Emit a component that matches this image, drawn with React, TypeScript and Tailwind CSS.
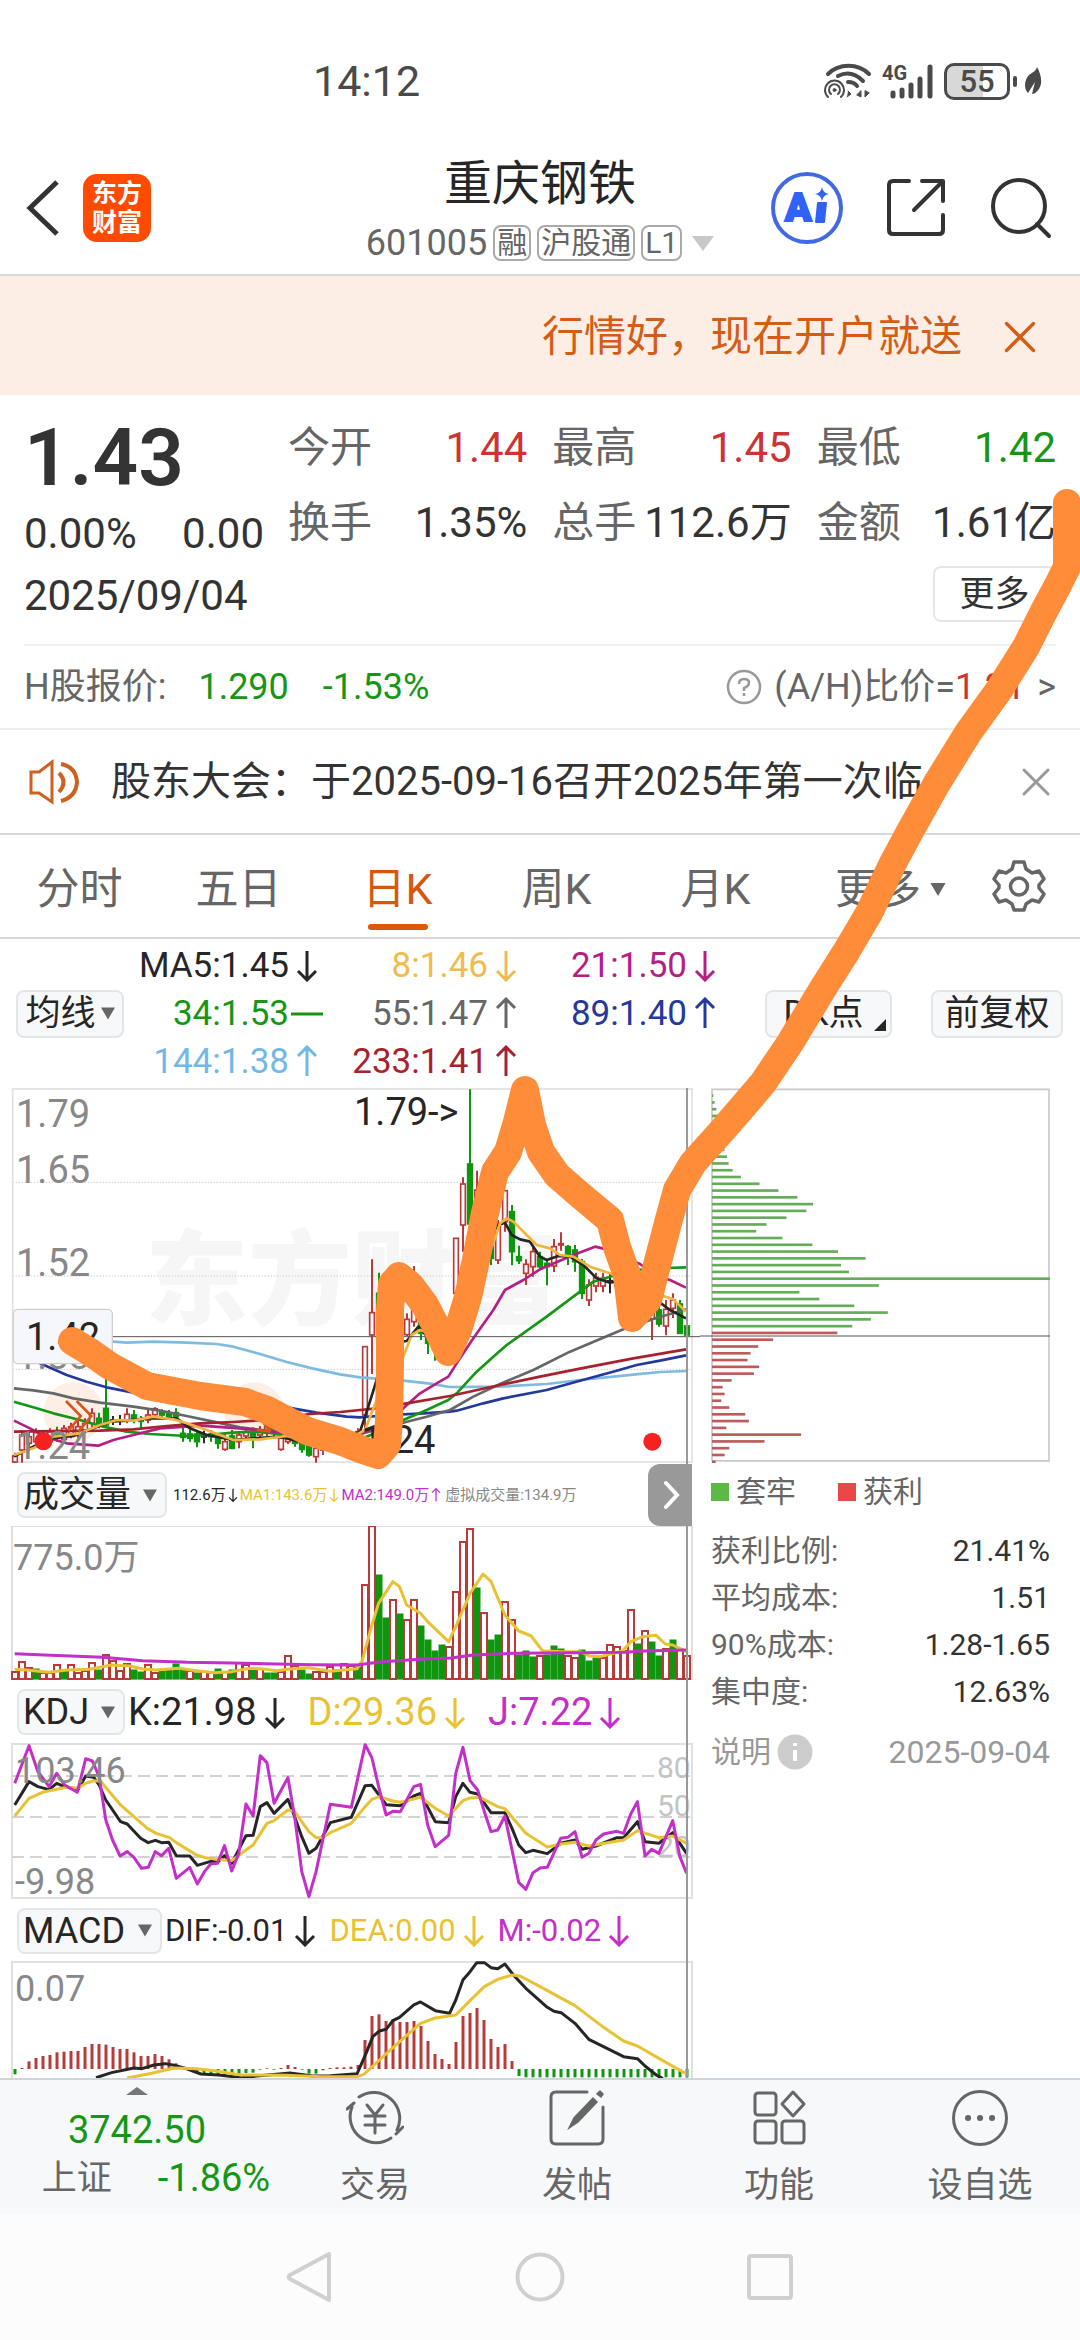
import { X } from 'lucide-react'
import type { ReactElement, ReactNode } from 'react'

type Trend = 'up' | 'down' | 'flat'
type Candle = [index: number, color: string, high: number, low: number, top: number, bottom: number]

const RED = '#b93a38'
const GREEN = '#0f960f'
const COLORS: Record<string, string> = { r: RED, g: GREEN, k: '#2a2a2a' }

const STATS = [
  { label: '今开', value: '1.44', color: 'text-[#cc3333]' },
  { label: '最高', value: '1.45', color: 'text-[#cc3333]' },
  { label: '最低', value: '1.42', color: 'text-[#159615]' },
  { label: '换手', value: '1.35%', color: 'text-[#333]' },
  { label: '总手', value: '112.6万', color: 'text-[#333]' },
  { label: '金额', value: '1.61亿', color: 'text-[#333]' },
]

const TABS = ['分时', '五日', '日K', '周K', '月K']

const AVERAGES: { text: string; trend: Trend; color: string }[] = [
  { text: 'MA5:1.45', trend: 'down', color: 'text-[#262626]' },
  { text: '8:1.46', trend: 'down', color: 'text-[#eebb4d]' },
  { text: '21:1.50', trend: 'down', color: 'text-[#b51f83]' },
  { text: '34:1.53', trend: 'flat', color: 'text-[#159615]' },
  { text: '55:1.47', trend: 'up', color: 'text-[#666]' },
  { text: '89:1.40', trend: 'up', color: 'text-[#24399b]' },
  { text: '144:1.38', trend: 'up', color: 'text-[#72b8e6]' },
  { text: '233:1.41', trend: 'up', color: 'text-[#a8222d]' },
]

const CHIP_STATS = [
  ['获利比例:', '21.41%'],
  ['平均成本:', '1.51'],
  ['90%成本:', '1.28-1.65'],
  ['集中度:', '12.63%'],
]

const CHIPS = [
  4, 8, 13, 17, 15, 25, 28, 32, 37, 45, 50, 62, 87, 143, 200, 257, 304, 284, 224, 164, 133, 212, 302, 379, 462, 388,
  412, 1017, 502, 263, 323, 428, 529, 478, 422, 377, 184, 139, 116, 107, 142, 126, 59, 32, 38, 28, 52, 100, 111, 43,
  268, 158, 52, 38, 11,
]

const CANDLES: Candle[] = [
  [0, 'r', 1118, 1148, 1128, 1146],
  [1, 'r', 1052, 1148, 1065, 1110],
  [2, 'r', 1050, 1100, 1070, 1090],
  [3, 'r', 1045, 1095, 1058, 1085],
  [4, 'g', 1050, 1090, 1060, 1080],
  [5, 'r', 1045, 1090, 1055, 1085],
  [6, 'g', 1040, 1085, 1052, 1075],
  [7, 'r', 1035, 1085, 1045, 1078],
  [8, 'r', 1028, 1075, 1040, 1065],
  [9, 'r', 1020, 1075, 1040, 1062],
  [10, 'r', 1015, 1060, 1030, 1050],
  [11, 'r', 985, 1055, 1000, 1030],
  [12, 'g', 998, 1045, 1015, 1030],
  [13, 'g', 880, 1040, 985, 1035],
  [14, 'k', 1008, 1035, 1020, 1023],
  [15, 'k', 1005, 1035, 1020, 1023],
  [16, 'r', 985, 1030, 1003, 1022],
  [17, 'g', 990, 1030, 1005, 1020],
  [18, 'g', 1008, 1045, 1018, 1024],
  [19, 'r', 990, 1030, 1005, 1020],
  [20, 'r', 982, 1010, 986, 1004],
  [21, 'g', 988, 1015, 998, 1005],
  [22, 'g', 990, 1018, 1000, 1010],
  [23, 'g', 985, 1018, 998, 1010],
  [24, 'g', 1038, 1085, 1060, 1072],
  [25, 'g', 1042, 1085, 1062, 1075],
  [26, 'g', 1050, 1102, 1062, 1085],
  [27, 'k', 1052, 1090, 1068, 1071],
  [28, 'g', 1050, 1085, 1062, 1070],
  [29, 'g', 1060, 1106, 1070, 1090],
  [30, 'r', 1062, 1112, 1085, 1108],
  [31, 'g', 1050, 1108, 1068, 1105],
  [32, 'r', 1055, 1105, 1065, 1085],
  [33, 'r', 1048, 1080, 1055, 1068],
  [34, 'g', 1042, 1105, 1055, 1075],
  [35, 'r', 1038, 1080, 1050, 1065],
  [36, 'r', 1030, 1068, 1040, 1058],
  [37, 'g', 1035, 1070, 1045, 1060],
  [38, 'r', 1058, 1112, 1075, 1108],
  [39, 'r', 1060, 1092, 1068, 1085],
  [40, 'g', 1060, 1100, 1070, 1090],
  [41, 'g', 1080, 1118, 1090, 1108],
  [42, 'g', 1085, 1130, 1095, 1125],
  [43, 'r', 1095, 1148, 1105, 1130],
  [44, 'r', 1080, 1125, 1090, 1110],
  [45, 'g', 1075, 1115, 1085, 1100],
  [46, 'r', 1065, 1110, 1075, 1095],
  [47, 'r', 1058, 1100, 1070, 1085],
  [48, 'k', 1060, 1090, 1072, 1075],
  [49, 'r', 1045, 1085, 1055, 1075],
  [50, 'r', 800, 1050, 800, 1005],
  [51, 'r', 538, 882, 698, 765],
  [52, 'g', 578, 790, 640, 780],
  [53, 'g', 620, 800, 650, 770],
  [54, 'r', 640, 810, 660, 780],
  [55, 'g', 680, 800, 700, 780],
  [56, 'r', 700, 768, 718, 764],
  [57, 'r', 558, 740, 690, 725],
  [58, 'g', 660, 780, 690, 760],
  [59, 'g', 740, 822, 760, 790],
  [60, 'g', 780, 842, 790, 810],
  [61, 'r', 750, 830, 770, 810],
  [62, 'k', 720, 790, 750, 753],
  [63, 'r', 475, 640, 475, 640],
  [64, 'r', 292, 515, 312, 435],
  [65, 'g', 28, 434, 252, 432],
  [66, 'r', 272, 500, 330, 440],
  [67, 'g', 252, 540, 300, 480],
  [68, 'g', 430, 555, 470, 535],
  [69, 'r', 420, 552, 440, 540],
  [70, 'r', 330, 455, 332, 425],
  [71, 'g', 375, 556, 395, 515],
  [72, 'g', 497, 552, 530, 542],
  [73, 'r', 538, 615, 553, 580],
  [74, 'r', 498, 590, 515, 560],
  [75, 'g', 515, 570, 530, 560],
  [76, 'g', 540, 616, 550, 560],
  [77, 'r', 477, 576, 500, 558],
  [78, 'r', 457, 512, 491, 495],
  [79, 'g', 495, 555, 500, 525],
  [80, 'g', 495, 575, 510, 545],
  [81, 'g', 537, 657, 545, 640],
  [82, 'r', 598, 678, 615, 660],
  [83, 'r', 578, 637, 592, 618],
  [84, 'r', 578, 637, 595, 618],
  [85, 'k', 580, 640, 602, 606],
  [86, 'r', 580, 630, 590, 618],
  [87, 'g', 590, 640, 600, 625],
  [88, 'r', 560, 640, 580, 620],
  [89, 'g', 600, 680, 620, 660],
  [90, 'g', 640, 700, 650, 690],
  [91, 'r', 690, 780, 700, 716],
  [92, 'g', 670, 740, 690, 732],
  [93, 'r', 660, 766, 688, 738],
  [94, 'r', 640, 714, 660, 685],
  [95, 'g', 660, 761, 672, 760],
  [96, 'g', 718, 780, 738, 765],
]

const PRICE_LINES = [
  { color: '#7dbbe0', points: '45,760 200,778 340,785 380,788 460,785 560,788 650,792 700,800 780,822 860,846 940,866 1020,883 1080,892 1210,902 1290,911 1350,921 1500,920 1640,912 1740,900 1900,884 1980,876 2058,873' },
  { color: '#24399b', points: '45,800 120,850 200,885 260,905 320,922 400,938 560,960 720,970 860,982 950,998 1040,1010 1080,1012 1170,1005 1270,1000 1350,995 1370,992 1450,970 1510,955 1640,930 1740,902 1850,872 1910,855 1980,842 2058,826' },
  { color: '#666', points: '42,925 100,931 160,940 220,955 300,968 400,980 480,992 560,1008 640,1025 720,1042 800,1052 900,1060 1000,1066 1090,1060 1215,1027 1280,1010 1350,990 1420,950 1500,912 1600,870 1710,815 1870,748 1960,717 2058,688' },
  { color: '#159615', points: '42,965 110,985 160,1000 240,1020 310,1040 380,1055 450,1062 560,1068 620,1065 700,1058 760,1055 840,1062 960,1075 1080,1078 1150,1050 1210,1020 1280,990 1345,960 1370,940 1425,880 1480,830 1520,795 1640,710 1740,635 1780,605 1830,590 1880,572 2000,564 2058,562' },
  { color: '#b51f83', points: '42,1022 90,1045 140,1072 200,1090 295,1097 340,1080 400,1065 480,1045 600,1037 720,1045 850,1058 1050,1070 1140,1040 1210,985 1260,940 1310,910 1345,890 1370,850 1420,775 1480,690 1515,630 1570,600 1620,568 1720,525 1785,500 1820,508 1870,530 1920,552 1970,588 2010,600 2058,623' },
  { color: '#a8222d', points: '42,1055 300,1052 400,1048 500,1038 600,1030 700,1026 800,1020 930,1002 1020,996 1130,985 1220,970 1350,948 1500,915 1620,890 1740,866 1900,835 2058,808' },
  { color: '#262626', points: '42,1130 100,1100 150,1075 220,1068 280,1045 330,1025 380,1022 440,1015 530,1015 570,1045 620,1065 700,1080 760,1075 840,1070 900,1085 970,1103 1030,1080 1080,1055 1105,980 1130,900 1170,790 1205,785 1220,783 1255,740 1300,790 1350,760 1400,600 1460,480 1495,435 1515,428 1535,465 1560,478 1590,485 1620,530 1640,540 1675,528 1710,530 1750,555 1790,595 1830,608 1870,600 1920,620 1980,668 2010,690 2058,715' },
  { color: '#f2b43f', points: '42,1125 100,1105 160,1070 240,1060 300,1035 350,1020 400,1022 460,1010 520,1018 560,1030 620,1050 700,1080 780,1078 860,1068 970,1090 1050,1075 1095,1050 1130,960 1170,870 1210,830 1235,765 1260,750 1350,780 1420,620 1480,490 1500,430 1520,415 1540,425 1580,465 1610,495 1650,505 1680,525 1720,530 1770,560 1830,580 1880,600 1940,635 1990,648 2020,658 2058,695' },
]

// one letter and one height per trading day
const VOLUME_SIDES = 'rrrgrrrgrrrrgrrrrggrrggggrgrrgrgrrgrggrrrggrrrgrrgrrggrgrrggggrrrrgrggrrgggrgggrrgggrrrrrgrggrgrrgr'
const VOLUME_HEIGHTS = [
  7, 17, 11, 10, 6, 6, 14, 9, 14, 6, 8, 16, 9, 24, 18, 8, 15, 9, 7, 14, 6, 8, 9, 15, 10, 8, 6, 7, 6, 10, 7, 9, 16, 14,
  10, 10, 6, 6, 7, 23, 13, 9, 5, 7, 7, 12, 9, 15, 13, 12, 94, 153, 104, 61, 79, 65, 59, 79, 53, 39, 28, 34, 32, 87, 137,
  150, 91, 66, 39, 44, 77, 59, 24, 28, 22, 23, 24, 33, 30, 23, 21, 29, 18, 21, 21, 34, 32, 28, 69, 35, 48, 37, 23, 30,
  39, 29, 23,
]

// top edges, measured against a zero line at 507
const MACD_TOPS = [
  523, 504, 484, 474, 468, 465, 457, 455, 453, 453, 441, 432, 432, 434, 441, 447, 447, 457, 468, 468, 462, 468, 478,
  490, 503, 510, 520, 523, 525, 526, 527, 525, 521, 519, 518, 509, 505, 509, 504, 495, 501, 509, 521, 521, 511, 504,
  502, 502, 500, 495, 420, 348, 343, 363, 358, 366, 366, 363, 378, 423, 462, 477, 492, 426, 348, 339, 324, 360, 417,
  441, 432, 483, 528, 532, 532, 532, 532, 532, 532, 532, 532, 532, 532, 532, 532, 532, 532, 532, 532, 532, 532, 532,
  532, 532, 532, 532, 532,
]

function TrendArrow({ trend, className }: { trend: Trend; className: string }): ReactElement {
  const paths: Record<Trend, string> = {
    down: 'M16 2V31M7 22L16 31L25 22',
    up: 'M16 31V2M7 11L16 2L25 11',
    flat: 'M0 17H32',
  }
  return (
    <svg viewBox="0 0 32 33" className={className} fill="none" stroke="currentColor" strokeWidth="3">
      <path d={paths[trend]} />
    </svg>
  )
}

function Triangle({ className }: { className: string }): ReactElement {
  return (
    <svg viewBox="0 0 14 12" className={className} fill="currentColor">
      <path d="M0 0H14L7 12Z" />
    </svg>
  )
}

function StatusBar(): ReactElement {
  return (
    <div className="flex h-[120px] items-center justify-between pt-[42px] pr-[38px] pl-[313px] text-[#4a4a4a]">
      <span className="text-[43px] leading-none">14:12</span>
      <div className="flex items-center">
        <svg viewBox="0 0 48 36" className="h-[36px] w-[48px]" fill="none" stroke="currentColor" strokeLinecap="round">
          <path d="M4 11C15 0 34 0 45 11" strokeWidth="4" />
          <path d="M14 13C22 9 31 10 39 18" strokeWidth="4" />
          <path d="M24 19C28 19 31 20 33 23" strokeWidth="4" />
          <path d="M4 34A9.500 9.500 0 1 1 17 34" strokeWidth="2" />
          <path d="M7 31A5.500 5.500 0 1 1 14 31" strokeWidth="2" />
          <circle cx="10.500" cy="27" r="1.500" fill="currentColor" strokeWidth="1" />
          <path d="M24 28L27 31L23 34M37 28V34L33 32ZM41 28V34L45 30Z" fill="currentColor" strokeWidth="1" />
        </svg>
        <svg viewBox="0 0 54 38" className="ml-[10px] h-[38px] w-[54px]" stroke="currentColor" strokeWidth="5" strokeLinecap="round">
          <text x="0" y="18" fontSize="20" fontWeight="700" fill="currentColor" stroke="none">4G</text>
          <path d="M11 31V34M20 28V34M29 23V34M38 17V34M48 5V34" />
        </svg>
        <div className="ml-[8px] flex h-[37px] w-[66px] items-center justify-center rounded-[10px] border-[3px] border-current bg-linear-to-r from-[#d8d8d8] from-60% to-white to-60% text-[31px] leading-none font-medium">
          55
        </div>
        <span className="ml-[3px] h-[11px] w-[4px] rounded-full bg-[#4a4a4a]" />
        <svg viewBox="0 0 18 30" className="ml-[7px] h-[30px] w-[18px]" fill="currentColor">
          <path d="M13 1C17 8 19 17 15 23C13 26 10 28 8 28L11 16L4 27C-1 22 1 13 5 9C9 6 12 5 13 1Z" />
        </svg>
      </div>
    </div>
  )
}

function Tag({ children }: { children: ReactNode }): ReactElement {
  return (
    <span className="flex h-[36px] items-center rounded-[8px] border-2 border-[#aaa] px-[2px] text-[30px] leading-none">
      {children}
    </span>
  )
}

function Header(): ReactElement {
  return (
    <header className="relative flex h-[156px] items-center justify-between border-b-2 border-[#d8d8d8] pt-[22px] pr-[28px] pl-[24px]">
      <div className="flex items-center">
        <button type="button" aria-label="返回" className="flex h-[70px] w-[40px] items-center text-[#333]">
          <svg viewBox="0 0 36 56" className="h-[56px] w-[36px]" fill="none" stroke="currentColor" strokeWidth="5">
            <path d="M33 2L6 28L33 54" />
          </svg>
        </button>
        <a href="#home" className="ml-[19px] flex h-[68px] w-[68px] flex-col items-center justify-center rounded-[14px] bg-[#ff4a03] text-[25px] leading-[29px] font-bold text-white">
          <span>东方</span>
          <span>财富</span>
        </a>
      </div>
      <div className="absolute inset-x-[340px] top-[34px] flex flex-col items-center">
        <h1 className="text-[48px] leading-[60px] text-[#262626]">重庆钢铁</h1>
        <button type="button" className="mt-[9px] flex items-center gap-[6px] text-[36px] leading-[40px] whitespace-nowrap text-[#666]">
          <span>601005</span>
          <Tag>融</Tag>
          <Tag>沪股通</Tag>
          <Tag>L1</Tag>
          <svg viewBox="0 0 22 15" className="ml-[4px] h-[15px] w-[22px]" fill="#c8c8c8">
            <path d="M0 0H22L11 15Z" />
          </svg>
        </button>
      </div>
      <div className="flex items-center">
        <button type="button" aria-label="Ai" className="mr-[43px]">
          <svg viewBox="0 0 72 72" className="h-[72px] w-[72px]">
            <circle cx="36" cy="36" r="34" fill="none" stroke="#4169e1" strokeWidth="4" />
            <text x="14" y="49" fontSize="39" fontWeight="900" fill="#2f62f5" stroke="#2f62f5" strokeWidth="2">A</text>
            <path d="M47 31H55L53 50H45Z" fill="#2f62f5" stroke="#2f62f5" strokeWidth="2" strokeLinejoin="round" />
            <path d="M51 15Q52 21 58 22Q52 23 51 29Q50 23 44 22Q50 21 51 15Z" fill="#2f62f5" />
          </svg>
        </button>
        <button type="button" aria-label="分享" className="mr-[44px]">
          <svg viewBox="0 0 60 60" className="h-[60px] w-[60px]" fill="none" stroke="#333" strokeWidth="4" strokeLinecap="round" strokeLinejoin="round">
            <path d="M23 3H7Q3 3 3 7V52Q3 56 7 56H53Q57 56 57 52V37M36 3H57V23M56 4L28 32" />
          </svg>
        </button>
        <button type="button" aria-label="搜索">
          <svg viewBox="0 0 62 62" className="h-[62px] w-[62px]" fill="none" stroke="#333" strokeWidth="4" strokeLinecap="round">
            <circle cx="29" cy="29" r="26" />
            <path d="M47 47L59 59" />
          </svg>
        </button>
      </div>
    </header>
  )
}

function Banner(): ReactElement {
  return (
    <div className="flex h-[119px] items-center justify-end bg-[#fceee5] pt-[2px] pr-[42px] text-[#d35d14]">
      <a href="#open" className="text-[42px] leading-none">行情好，现在开户就送</a>
      <button type="button" aria-label="关闭" className="ml-[40px]">
        <X className="h-[36px] w-[36px]" strokeWidth={1.5} viewBox="4 4 16 16" />
      </button>
    </div>
  )
}

function Quote(): ReactElement {
  return (
    <section className="mx-[24px] grid grid-cols-[264px_1fr] border-b-2 border-[#f0f0f0] pt-[15px] pb-[14px] text-[42px] leading-none text-[#333]">
      <div>
        <div className="flex h-[96px] items-center text-[80px] font-semibold">1.43</div>
        <div className="flex h-[56px] w-[240px] items-center justify-between">
          <span>0.00%</span>
          <span>0.00</span>
        </div>
        <div className="flex h-[68px] items-center">2025/09/04</div>
      </div>
      <div>
        <dl className="grid grid-cols-3 gap-x-[25px]">
          {STATS.map((s) => (
            <div key={s.label} className="flex h-[75px] items-center justify-between whitespace-nowrap">
              <dt className="text-[#666]">{s.label}</dt>
              <dd className={s.color}>{s.value}</dd>
            </div>
          ))}
        </dl>
        <button type="button" className="mt-[6px] ml-auto block h-[56px] w-[123px] rounded-[8px] border-2 border-[#e6e6e6] text-[35px] leading-none">
          更多
        </button>
      </div>
    </section>
  )
}

function HShareRow(): ReactElement {
  return (
    <div className="flex h-[84px] items-center border-b-2 border-[#ececec] px-[24px] text-[36px] leading-none text-[#666]">
      <span>H股报价:</span>
      <span className="ml-[32px] text-[#159615]">1.290</span>
      <span className="ml-[34px] text-[#159615]">-1.53%</span>
      <button type="button" className="ml-auto flex items-center">
        <svg viewBox="0 0 36 36" className="mr-[12px] h-[36px] w-[36px] text-[#999]" fill="none" stroke="currentColor" strokeWidth="2.500">
          <circle cx="18" cy="18" r="16" />
          <path d="M13 15Q13 10 18 10Q23 10 23 14Q23 17 18 19V22M18 24V27" />
        </svg>
        <span>(A/H)比价=</span>
        <span className="text-[#cc3333]">1.21</span>
        <span className="ml-[12px]">&gt;</span>
      </button>
    </div>
  )
}

function Notice(): ReactElement {
  return (
    <div className="flex h-[105px] items-center border-b-2 border-[#d5d8da] pr-[28px] pl-[28px]">
      <svg viewBox="0 0 54 46" className="h-[46px] w-[54px] shrink-0" fill="none" stroke="#cc6122" strokeWidth="3">
        <path d="M3 13H11L24 3V43L11 34H3Z" />
        <path d="M31 14Q40 23 31 33M33 5Q48 8 49 23Q48 38 33 42" strokeWidth="4" />
      </svg>
      <p className="ml-[29px] text-[40px] leading-[56px] whitespace-nowrap text-[#333]">
        股东大会：于2025-09-16召开2025年第一次临
      </p>
      <button type="button" aria-label="关闭" className="ml-auto text-[#999]">
        <X className="h-[32px] w-[32px]" strokeWidth={1.5} viewBox="4 4 16 16" />
      </button>
    </div>
  )
}

function Tabs(): ReactElement {
  return (
    <nav className="grid h-[104px] grid-cols-[repeat(6,159fr)_126fr] border-b-2 border-[#d5d8da] text-[43px] leading-none text-[#666]">
      {TABS.map((tab) => (
        <button
          key={tab}
          type="button"
          className={tab === '日K' ? 'relative pt-[6px] text-[#d8570f]' : 'relative pt-[6px]'}
        >
          {tab}
          {tab === '日K' && <span className="absolute inset-x-0 bottom-[7px] mx-auto h-[6px] w-[60px] rounded-full bg-[#dc580d]" />}
        </button>
      ))}
      <button type="button" className="flex items-center justify-end gap-[9px] pt-[6px] pr-[8px]">
        更多
        <Triangle className="h-[13px] w-[16px]" />
      </button>
      <button type="button" aria-label="设置" className="flex items-center justify-center pl-[3px]">
        <svg viewBox="0 0 54 54" className="h-[54px] w-[54px]" fill="none" stroke="currentColor" strokeWidth="3.500" strokeLinejoin="round">
          <path d="M22 3H32L34 10L40 14L47 12L52 20L47 26V29L52 35L47 43L40 41L34 45L32 51H22L20 45L14 41L7 43L2 35L7 29V26L2 20L7 12L14 14L20 10Z" />
          <circle cx="27" cy="27.500" r="8.500" />
        </svg>
      </button>
    </nav>
  )
}

function AverageBar(): ReactElement {
  return (
    <div className="flex h-[149px] items-center pr-[17px] pl-[16px] text-[35px] leading-none text-[#262626]">
      <button type="button" className="flex h-[48px] w-[108px] shrink-0 items-center justify-center gap-[5px] rounded-[8px] border-2 border-[#e3e6e9] bg-[#f7f8fa]">
        均线
        <Triangle className="h-[13px] w-[14px] text-[#666]" />
      </button>
      <div className="grid w-[597px] shrink-0 grid-cols-3">
        {AVERAGES.map((a) => (
          <span key={a.text} className={`flex h-[48px] items-center justify-end ${a.color}`}>
            {a.text}
            <TrendArrow trend={a.trend} className="ml-[2px] h-[33px] w-[32px]" />
          </span>
        ))}
      </div>
      <button type="button" className="relative ml-auto h-[48px] w-[127px] rounded-[8px] border-2 border-[#e3e6e9] bg-[#f7f8fa] pr-[10px]">
        DK点
        <svg viewBox="0 0 12 12" className="absolute right-[4px] bottom-[5px] h-[12px] w-[12px]">
          <path d="M12 0V12H0Z" fill="#262626" />
        </svg>
      </button>
      <button type="button" className="ml-[39px] h-[48px] w-[132px] rounded-[8px] border-2 border-[#e3e6e9] bg-[#f7f8fa]">
        前复权
      </button>
    </div>
  )
}

function PriceChart(): ReactElement {
  return (
    <svg viewBox="0 24 2100 1128" className="block h-auto w-full" fill="none">
      <text x="435" y="712" fontSize="310" fontWeight="900" fill="#f6f6f6">东方财富</text>
      <g stroke="#ccc" strokeWidth="3" strokeDasharray="4 5">
        <path d="M38 307H2076M38 588H2076M38 868H2076" />
      </g>
      <rect x="38" y="27" width="2038" height="1119" stroke="#e0e0e0" strokeWidth="5" />
      <g fill="#fdeee6">
        <circle cx="220" cy="997" r="90" />
        <circle cx="763" cy="997" r="90" />
      </g>
      {CANDLES.map(([i, c, high, low, top, bottom]) => {
        const x = 45 + i * 21
        return (
          <g key={i} stroke={COLORS[c]} strokeWidth="6">
            {c === 'r' ? <path d={`M${x} ${high}V${top}M${x} ${bottom}V${low}`} /> : <path d={`M${x} ${high}V${low}`} />}
            <rect x={x - 7} y={top} width="14" height={bottom - top} fill={c === 'r' ? '#fff' : COLORS[c]} strokeWidth="5" />
          </g>
        )
      })}
      {PRICE_LINES.map((l) => (
        <polyline key={l.color} points={l.points} stroke={l.color} strokeWidth="8" strokeLinejoin="round" />
      ))}
      <g stroke="#d9561a" strokeWidth="8">
        <path d="M198 963L242 1008L205 1052M230 963L274 1008L235 1055M770 1000L808 1052M815 1010L808 1054L770 1050" />
      </g>
      <g fill="#888" fontSize="114">
        <text x="48" y="142">1.79</text>
        <text x="48" y="310">1.65</text>
        <text x="48" y="588">1.52</text>
        <text x="48" y="868">1.38</text>
        <text x="48" y="1136">1.24</text>
      </g>
      <g fill="#262626" fontSize="114">
        <text x="1062" y="134">1.79-&gt;</text>
        <text x="1084" y="1120">1.24</text>
      </g>
      <path d="M338 770H2100" stroke="#555" strokeWidth="3" />
      <rect x="40" y="688" width="297" height="163" rx="14" fill="#f5f7fa" stroke="#cfcfcf" strokeWidth="4" />
      <text x="78" y="809" fontSize="114" fill="#262626">1.42</text>
      <circle cx="130" cy="1084" r="27" fill="#f52222" />
      <circle cx="1957" cy="1085" r="27" fill="#f52222" />
    </svg>
  )
}

function IndicatorSelect({ name, className }: { name: string; className: string }): ReactElement {
  return (
    <button
      type="button"
      className={`flex h-[46px] shrink-0 items-center justify-between rounded-[8px] border-2 border-[#e3e6e9] bg-[#f7f8fa] px-[4px] text-[36px] leading-none text-[#262626] ${className}`}
    >
      {name}
      <Triangle className="mr-[4px] h-[13px] w-[14px] text-[#666]" />
    </button>
  )
}

function Reading({ text, trend, className }: { text: string; trend: Trend; className: string }): ReactElement {
  return (
    <span className={`flex items-center leading-none whitespace-nowrap ${className}`}>
      {text}
      <TrendArrow trend={trend} className="ml-[2px] h-[33px] w-[32px]" />
    </span>
  )
}

function VolumeChart(): ReactElement {
  return (
    <svg viewBox="0 1526 700 155" className="block h-auto w-full" fill="none">
      <rect x="12" y="1526" width="680" height="153" stroke="#e0e0e0" strokeWidth="2" />
      <text x="13" y="1570" fontSize="36" fill="#888">775.0万</text>
      {VOLUME_HEIGHTS.map((h, i) => {
        const up = VOLUME_SIDES[i] === 'r'
        return (
          <rect
            key={i}
            x={12 + i * 7}
            y={1679 - h}
            width="6"
            height={h}
            fill={up ? '#fff' : GREEN}
            stroke={up ? RED : GREEN}
            strokeWidth={up ? 2 : 1}
          />
        )
      })}
      <g transform="translate(0 1460) scale(.4464 .3333)" strokeWidth="3" strokeLinejoin="round">
        <polyline vectorEffect="non-scaling-stroke" stroke="#e8c233" points="33,628 60,630 110,637 150,630 200,628 250,615 290,618 320,627 350,630 400,625 440,632 480,638 520,635 560,625 590,627 620,632 650,627 690,623 740,634 800,626 812,600 832,500 848,430 880,365 895,380 911,435 942,460 958,485 1005,545 1021,500 1053,400 1082,342 1100,365 1131,465 1162,513 1190,528 1215,572 1260,575 1300,575 1320,588 1345,590 1395,573 1413,545 1440,530 1470,526 1490,552 1507,555 1538,575" />
        <polyline vectorEffect="non-scaling-stroke" stroke="#c32fc9" points="33,581 100,585 230,592 320,602 420,607 520,609 700,614 800,615 850,606 940,598 1010,594 1060,585 1150,580 1300,578 1400,577 1440,573 1538,570" />
      </g>
    </svg>
  )
}

function KdjChart(): ReactElement {
  return (
    <svg viewBox="0 1743 700 157" className="block h-auto w-full" fill="none">
      <rect x="12" y="1744" width="680" height="154" stroke="#e0e0e0" strokeWidth="2" />
      <path d="M12 1776H692M12 1817H692M12 1857H692" stroke="#d2d2d2" strokeWidth="2" strokeDasharray="12 6" />
      <g fill="#c4c4c4" fontSize="30">
        <text x="657" y="1778">80</text>
        <text x="657" y="1816">50</text>
        <text x="657" y="1857">20</text>
      </g>
      <g transform="translate(0 1690) scale(.4464 .3333)" strokeWidth="3" strokeLinejoin="round">
        <polyline vectorEffect="non-scaling-stroke" stroke="#262626" points="33,345 65,275 85,290 110,299 127,280 145,290 160,295 173,303 192,258 210,262 222,285 237,330 270,395 285,402 315,445 332,458 348,451 362,458 378,457 395,497 425,498 442,526 472,514 487,517 503,497 519,520 551,437 567,436 583,350 598,338 614,370 645,328 660,380 676,440 692,490 708,475 740,398 787,382 818,287 833,286 865,344 897,347 927,318 942,310 975,395 1005,398 1021,320 1037,280 1053,307 1070,312 1100,368 1131,368 1147,415 1162,465 1178,488 1194,481 1226,491 1256,460 1288,450 1304,478 1335,468 1382,443 1397,443 1428,395 1445,455 1476,460 1507,428 1523,460 1538,490" />
        <polyline vectorEffect="non-scaling-stroke" stroke="#e8c233" points="33,378 65,325 95,307 127,298 150,292 175,294 192,280 210,272 225,273 270,345 330,415 350,430 380,443 395,458 440,495 460,503 487,508 519,512 551,480 567,465 598,400 614,392 645,360 660,365 692,425 708,443 722,443 740,428 787,400 818,350 833,328 850,320 880,333 897,337 942,322 975,355 1005,378 1037,332 1053,324 1075,322 1115,350 1131,356 1178,430 1226,471 1256,462 1288,457 1319,468 1397,450 1428,422 1476,443 1507,438 1538,460" />
        <polyline vectorEffect="non-scaling-stroke" stroke="#c32fc9" points="33,280 65,167 85,245 110,290 127,250 145,285 173,307 192,206 207,213 222,260 237,390 252,450 269,498 285,485 300,502 317,535 332,532 348,485 362,497 378,475 395,565 425,532 442,582 458,545 472,522 487,520 503,467 519,543 535,490 551,342 567,378 583,197 598,218 614,340 645,263 660,380 676,545 692,620 708,545 740,343 787,352 818,164 833,203 850,300 865,375 880,364 897,365 927,290 942,283 958,405 975,470 1005,436 1021,250 1037,172 1053,272 1070,300 1085,365 1100,425 1115,420 1131,378 1147,480 1162,577 1178,598 1194,548 1210,534 1226,532 1256,445 1272,442 1288,425 1304,502 1319,490 1335,450 1352,432 1382,424 1397,430 1413,372 1428,335 1445,498 1460,478 1476,490 1507,392 1523,500 1538,550" />
      </g>
      <g fill="#888" fontSize="36">
        <text x="15" y="1783">103.46</text>
        <text x="15" y="1894">-9.98</text>
      </g>
    </svg>
  )
}

function MacdChart(): ReactElement {
  return (
    <svg viewBox="0 1961 700 117" className="block h-auto w-full" fill="none">
      <rect x="12" y="1962" width="680" height="154" stroke="#e0e0e0" strokeWidth="2" />
      <text x="15" y="2001" fontSize="36" fill="#888">0.07</text>
      {MACD_TOPS.map((top, i) => {
        const y = 1900 + top / 3
        return <path key={i} d={`M${15 + i * 7} 2069V${y}`} stroke={top < 507 ? RED : GREEN} strokeWidth="3" />
      })}
      <g transform="translate(0 1900) scale(.4464 .3333)" strokeWidth="3" strokeLinejoin="round">
        <polyline vectorEffect="non-scaling-stroke" stroke="#262626" points="215,533 250,518 300,504 318,506 345,495 370,491 390,496 420,507 450,522 490,525 540,533 600,525 650,519 700,528 740,527 800,521 820,460 835,410 850,393 865,388 880,362 895,352 927,315 942,306 975,332 1007,340 1021,300 1037,240 1053,215 1068,188 1085,188 1100,203 1115,206 1131,192 1150,225 1178,265 1226,322 1241,334 1257,338 1288,370 1319,418 1397,470 1428,476 1445,498 1470,525 1485,536" />
        <polyline vectorEffect="non-scaling-stroke" stroke="#e8c233" points="285,534 340,520 390,504 440,506 480,512 540,525 640,526 720,530 800,530 815,523 850,480 880,443 942,370 975,354 1021,345 1053,302 1085,260 1115,238 1147,225 1165,228 1210,260 1288,317 1350,380 1397,423 1428,438 1485,482 1538,522" />
      </g>
    </svg>
  )
}

function KLinePanel(): ReactElement {
  return (
    <div className="relative">
      <PriceChart />
      <div className="flex h-[62px] items-center pr-[8px] pl-[17px] text-[15px] leading-none whitespace-nowrap">
        <IndicatorSelect name="成交量" className="w-[150px]" />
        <span className="ml-[6px] flex items-center text-[#262626]">
          112.6万<TrendArrow trend="down" className="h-[22px] w-[14px]" />
        </span>
        <span className="flex items-center text-[#e8c233]">
          MA1:143.6万<TrendArrow trend="down" className="h-[22px] w-[14px]" />
        </span>
        <span className="flex items-center text-[#c32fc9]">
          MA2:149.0万<TrendArrow trend="up" className="h-[22px] w-[14px]" />
        </span>
        <span className="ml-[2px] text-[#888]">虚拟成交量:134.9万</span>
        <button type="button" aria-label="展开" className="ml-auto flex h-[62px] w-[44px] items-center justify-center rounded-l-[12px] bg-[#999]">
          <svg viewBox="0 0 16 30" className="ml-[4px] h-[30px] w-[16px]" fill="none" stroke="#fff" strokeWidth="4" strokeLinecap="round">
            <path d="M2 3L13 15L2 27" />
          </svg>
        </button>
      </div>
      <VolumeChart />
      <div className="flex h-[62px] items-center pl-[17px] text-[38px]">
        <IndicatorSelect name="KDJ" className="w-[108px]" />
        <Reading text="K:21.98" trend="down" className="ml-[3px] text-[#262626]" />
        <Reading text="D:29.36" trend="down" className="ml-[17px] text-[#e8c233]" />
        <Reading text="J:7.22" trend="down" className="ml-[17px] text-[#c32fc9]" />
      </div>
      <KdjChart />
      <div className="flex h-[61px] items-center pl-[17px] text-[31px]">
        <IndicatorSelect name="MACD" className="w-[145px]" />
        <Reading text="DIF:-0.01" trend="down" className="ml-[3px] text-[#262626]" />
        <Reading text="DEA:0.00" trend="down" className="ml-[8px] text-[#e8c233]" />
        <Reading text="M:-0.02" trend="down" className="ml-[8px] text-[#c32fc9]" />
      </div>
      <MacdChart />
      <div className="absolute inset-y-0 left-[98%] w-[2px] bg-[#999]" />
    </div>
  )
}

function ChipPanel(): ReactElement {
  return (
    <aside className="pr-[30px]">
      <div className="pl-[11px]">
        <svg viewBox="30 24 1020 1128" className="block h-auto w-full" fill="none">
          <path d="M33 28H1047V1146H33Z" stroke="#c9c9c9" strokeWidth="5" />
          {CHIPS.map((w, i) => (
            <rect key={i} x="33" y={43 + i * 20.4} width={w} height="8" fill={i < 35 ? '#65ac58' : '#bd5b5a'} />
          ))}
        </svg>
      </div>
      <svg viewBox="0 0 350 2" className="-mt-[128px] mb-[126px] block h-[2px] w-full">
        <path d="M0 1H350" stroke="#555" strokeWidth="1" />
      </svg>
      <div className="pl-[11px] text-[30px] leading-none text-[#666]">
        <div className="flex h-[58px] items-center">
          <span className="h-[18px] w-[18px] bg-[#5cb945]" />
          <span className="ml-[7px]">套牢</span>
          <span className="ml-[42px] h-[18px] w-[18px] bg-[#e84848]" />
          <span className="ml-[7px]">获利</span>
        </div>
        <dl className="mt-[7px]">
          {CHIP_STATS.map(([label, value]) => (
            <div key={label} className="flex h-[47px] items-center justify-between">
              <dt>{label}</dt>
              <dd className="text-[#333]">{value}</dd>
            </div>
          ))}
        </dl>
        <div className="mt-[11px] flex h-[50px] items-center text-[#999]">
          <span>说明</span>
          <button type="button" aria-label="说明" className="ml-[6px]">
            <svg viewBox="0 0 36 36" className="h-[36px] w-[36px]">
              <circle cx="18" cy="18" r="17.500" fill="#ccc" />
              <path d="M18 9V12M18 16V27" stroke="#fff" strokeWidth="4" />
            </svg>
          </button>
          <time className="ml-auto text-[32px]">2025-09-04</time>
        </div>
      </div>
    </aside>
  )
}

const ACTIONS = [
  {
    label: '交易',
    icon: (
      <>
        <path d="M13 8A26 26 0 0 1 51 41M45 49A26 26 0 0 1 6 18M1 20L8 14M57 38L50 45" />
        <path d="M21 16L29 26L37 16M29 26V44M19 27H39M19 36H39" />
      </>
    ),
  },
  {
    label: '发帖',
    icon: (
      <>
        <path d="M39 3H8Q3 3 3 8V50Q3 55 8 55H50Q55 55 55 50V18" />
        <path d="M21 39L26 29L45 9L49 13L30 33ZM49 5L53 8L55 5L52 2Z" fill="currentColor" strokeWidth="1.500" />
      </>
    ),
  },
  {
    label: '功能',
    icon: (
      <>
        <rect x="5" y="4" width="21" height="22" rx="3" />
        <rect x="5" y="32" width="21" height="22" rx="3" />
        <rect x="32" y="32" width="22" height="22" rx="3" />
        <path d="M43 3L54 15L43 27L32 15Z" strokeLinejoin="round" />
      </>
    ),
  },
  {
    label: '设自选',
    icon: (
      <>
        <circle cx="29" cy="29" r="26.500" />
        <path d="M17 29H17.100M29 29H29.100M41 29H41.100" strokeWidth="6" />
      </>
    ),
  },
]

function BottomBar(): ReactElement {
  return (
    <footer className="grid h-[136px] grid-cols-[274fr_202fr_202fr_202fr_200fr] border-t-2 border-[#d0d5d9] bg-[#f7f8fa] text-[35px] leading-none text-[#666]">
      <button type="button" className="flex flex-col items-center pt-[7px] text-[38px] text-[#159615]">
        <svg viewBox="0 0 22 8" className="h-[8px] w-[22px]" fill="#777">
          <path d="M11 0L22 8H0Z" />
        </svg>
        <span className="mt-[13px] leading-[44px]">3742.50</span>
        <span className="mt-[7px] flex items-center gap-[46px] pl-[38px]">
          <span className="text-[35px] text-[#666]">上证</span>
          -1.86%
        </span>
      </button>
      {ACTIONS.map((a) => (
        <button key={a.label} type="button" className="flex flex-col items-center pt-[9px]">
          <svg viewBox="0 0 58 58" className="h-[58px] w-[58px]" fill="none" stroke="currentColor" strokeWidth="3" strokeLinecap="round">
            {a.icon}
          </svg>
          <span className="mt-[21px]">{a.label}</span>
        </button>
      ))}
    </footer>
  )
}

function SystemNav(): ReactElement {
  return (
    <div className="flex h-[126px] items-center justify-center gap-[180px] bg-[#fcfcfc]">
      <button type="button" aria-label="后退">
        <svg viewBox="0 0 50 50" className="h-[50px] w-[50px]" fill="none" stroke="#d0d0d0" strokeWidth="4" strokeLinejoin="round">
          <path d="M44 2V48L5 27Q2 25 5 23Z" />
        </svg>
      </button>
      <button type="button" aria-label="主页">
        <svg viewBox="0 0 50 50" className="h-[50px] w-[50px]" fill="none" stroke="#d0d0d0" strokeWidth="4">
          <circle cx="25" cy="25" r="22.500" />
        </svg>
      </button>
      <button type="button" aria-label="最近任务">
        <svg viewBox="0 0 50 50" className="h-[50px] w-[50px]" fill="none" stroke="#d0d0d0" strokeWidth="4">
          <rect x="4" y="4" width="42" height="42" rx="2" />
        </svg>
      </button>
    </div>
  )
}

function MarkerStroke(): ReactElement {
  return (
    <svg viewBox="0 0 1080 2340" className="pointer-events-none absolute inset-x-0 top-0 h-auto w-full" fill="none">
      <polyline
        points="72,1341 90,1352 110,1366 147,1386 200,1396 245,1402 267,1410 307,1431 340,1441 360,1449 378,1455 387,1445 389,1420 390,1363 390,1310 392,1284 399,1276 410,1285 425,1305 437,1328 448,1352 458,1330 468,1297 476,1260 485,1213 495,1172 508,1152 517,1122 525,1090 532,1125 541,1152 557,1175 580,1195 610,1220 617,1247 627,1275 632,1318 648,1300 657,1265 668,1223 677,1190 693,1163 720,1133 740,1110 763,1083 790,1043 822,990 846,952 869,913 893,863 908,835 937,783 968,733 999,690 1026,647 1043,613 1057,587 1067,567 1067,503"
        stroke="#ff8c38"
        strokeWidth="28"
        strokeLinecap="round"
        strokeLinejoin="round"
      />
    </svg>
  )
}

export default function App(): ReactElement {
  return (
    <div className="relative overflow-hidden bg-white font-['Roboto','Noto_Sans_CJK_SC',sans-serif]">
      <StatusBar />
      <Header />
      <Banner />
      <Quote />
      <HShareRow />
      <Notice />
      <Tabs />
      <AverageBar />
      <main className="grid grid-cols-[700fr_380fr]">
        <KLinePanel />
        <ChipPanel />
      </main>
      <BottomBar />
      <SystemNav />
      <MarkerStroke />
    </div>
  )
}
